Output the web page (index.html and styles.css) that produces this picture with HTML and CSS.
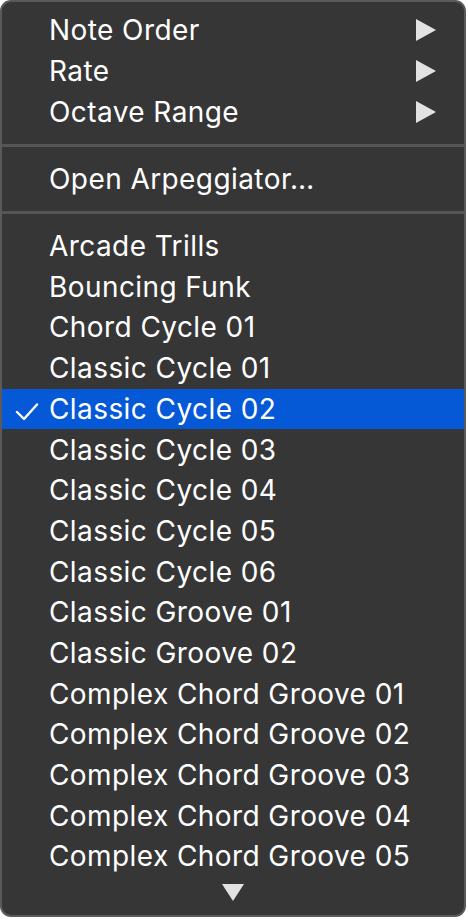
FILE: index.html
```html
<!DOCTYPE html>
<html>
<head>
<meta charset="utf-8">
<link rel="stylesheet" href="styles.css">
</head>
<body>
<div class="menu">
  <div class="row"><span class="label">Note Order</span><span class="sub"></span></div>
  <div class="row"><span class="label">Rate</span><span class="sub"></span></div>
  <div class="row"><span class="label">Octave Range</span><span class="sub"></span></div>
  <div class="sep"></div>
  <div class="row"><span class="label">Open Arpeggiator…</span></div>
  <div class="sep sep-2"></div>
  <div class="row"><span class="label">Arcade Trills</span></div>
  <div class="row"><span class="label">Bouncing Funk</span></div>
  <div class="row"><span class="label">Chord Cycle 01</span></div>
  <div class="row"><span class="label">Classic Cycle 01</span></div>
  <div class="row selected">
    <svg class="check" width="24" height="18" viewBox="0 0 24 18"><polyline points="2,9 9,16 22,1.5" fill="none" stroke="#fff" stroke-width="2.4" stroke-linecap="round" stroke-linejoin="round"/></svg>
    <span class="label">Classic Cycle 02</span>
  </div>
  <div class="row"><span class="label">Classic Cycle 03</span></div>
  <div class="row"><span class="label">Classic Cycle 04</span></div>
  <div class="row"><span class="label">Classic Cycle 05</span></div>
  <div class="row"><span class="label">Classic Cycle 06</span></div>
  <div class="row"><span class="label">Classic Groove 01</span></div>
  <div class="row"><span class="label">Classic Groove 02</span></div>
  <div class="row"><span class="label">Complex Chord Groove 01</span></div>
  <div class="row"><span class="label">Complex Chord Groove 02</span></div>
  <div class="row"><span class="label">Complex Chord Groove 03</span></div>
  <div class="row"><span class="label">Complex Chord Groove 04</span></div>
  <div class="row"><span class="label">Complex Chord Groove 05</span></div>
  <div class="more"><span class="down"></span></div>
</div>
</body>
</html>
```
FILE: styles.css
```css
html, body {
  margin: 0;
  padding: 0;
  background: #ffffff;
}
.menu {
  box-sizing: border-box;
  width: 466px;
  height: 917px;
  background: #363636;
  border: 2px solid #5a5a5a;
  border-radius: 11px;
  padding-top: 8px;
  overflow: hidden;
  font-family: "Inter", "Liberation Sans", sans-serif;
  font-size: 28px;
  color: #ffffff;
}
.row {
  position: relative;
  height: 40.7px;
  display: flex;
  align-items: center;
  padding-left: 47px;
  padding-right: 28px;
}
.label {
  flex: 1;
  white-space: nowrap;
  letter-spacing: 0.42px;
}
.sub {
  width: 0;
  height: 0;
  border-top: 11px solid transparent;
  border-bottom: 11px solid transparent;
  border-left: 20px solid #e2e2e2;
}
.selected {
  background: #0659d6;
}
.check {
  position: absolute;
  left: 13px;
  top: 14px;
}
.sep {
  height: 27px;
  display: flex;
  align-items: center;
}
.sep::before {
  content: "";
  display: block;
  width: 100%;
  height: 3px;
  background: #555555;
}
.sep-2 {
  height: 26px;
}
.more {
  display: flex;
  justify-content: center;
  padding-top: 7px;
}
.down {
  width: 0;
  height: 0;
  border-left: 11.5px solid transparent;
  border-right: 11.5px solid transparent;
  border-top: 17px solid #e2e2e2;
}
```
